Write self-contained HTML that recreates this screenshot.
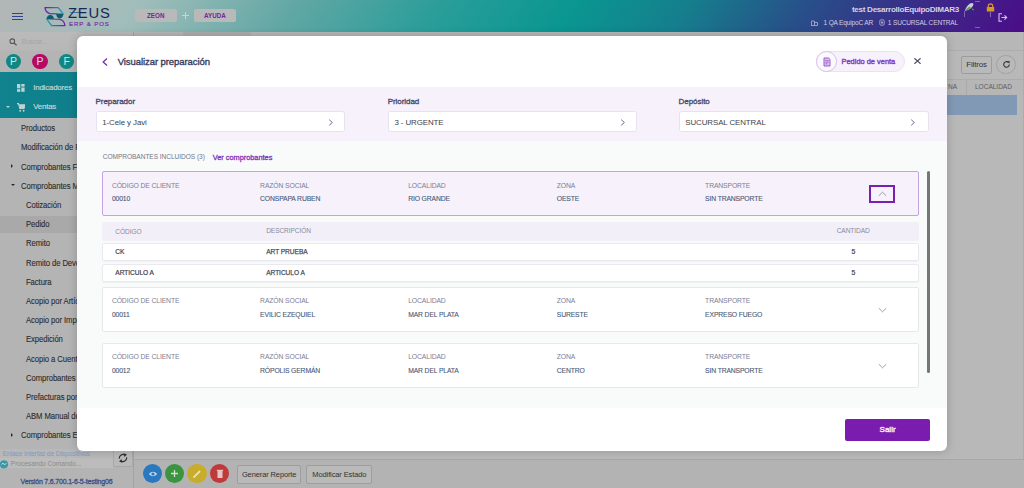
<!DOCTYPE html>
<html><head><meta charset="utf-8">
<style>
*{box-sizing:border-box;margin:0;padding:0}
html,body{width:1024px;height:488px;overflow:hidden;background:#b6b6b6;font-family:"Liberation Sans",sans-serif}
.a{position:absolute;white-space:nowrap}
#hdr{left:0;top:0;width:1024px;height:32px;background:linear-gradient(125deg,#b3b6b6 0%,#a1bdbb 13.5%,#60a7a4 28.8%,#289d99 43.1%,#0a9691 55.3%,#157f8d 66%,#284f89 77.5%,#382f88 87.1%,#4a0f88 99%)}
#side{left:0;top:32px;width:134px;height:456px;background:#b3b3b3;border-right:1px solid #a4a4a4}
#main{left:134px;top:32px;width:890px;height:456px;background:#b8b8b8}
.mi{position:absolute;left:21px;font-size:8.3px;color:#2b2b2b;white-space:nowrap;letter-spacing:-0.1px;-webkit-text-stroke:0.1px #2b2b2b;transform:scaleX(0.93);transform-origin:0 0}
.mi.sub{left:26px}
.circ{position:absolute;top:53.7px;width:15.2px;height:15.2px;border-radius:50%;color:#d8e2e2;font-size:10.5px;text-align:center;line-height:15.4px}
#modal{left:77px;top:36px;width:870px;height:415px;background:#fff;border-radius:6px;overflow:hidden;box-shadow:0 0 10px rgba(0,0,0,0.2)}
</style></head><body>
<!-- HEADER -->
<div id="hdr" class="a">
  <!-- hamburger -->
  <div class="a" style="left:11.5px;top:12.9px;width:11.5px;height:1.1px;background:#2f4390"></div>
  <div class="a" style="left:11.5px;top:15.9px;width:11.5px;height:1.1px;background:#2f4390"></div>
  <div class="a" style="left:11.5px;top:18.9px;width:11.5px;height:1.1px;background:#2f4390"></div>
  <!-- logo mark -->
  <svg class="a" style="left:42px;top:4px" width="26" height="24" viewBox="0 0 26 24">
    <defs>
      <linearGradient id="lg1" x1="0" y1="0" x2="1" y2="0"><stop offset="0" stop-color="#6d1ea6"/><stop offset="1" stop-color="#1fa3ad"/></linearGradient>
      <linearGradient id="lg2" x1="0" y1="0" x2="1" y2="0"><stop offset="0" stop-color="#1fa3ad"/><stop offset="1" stop-color="#7420a8"/></linearGradient>
    </defs>
    <path d="M3 3.7 L16.2 3.7 L21.4 10.1 L7.6 9.5 Q3.6 8.4 3 3.7 Z" fill="none" stroke="url(#lg1)" stroke-width="1.3" stroke-linejoin="round"/>
    <path d="M4.5 14.9 L17.7 15.3 Q22.4 16.2 22.9 21.6 L9.6 21.6 Z" fill="none" stroke="url(#lg2)" stroke-width="1.3" stroke-linejoin="round"/>
    <path d="M14.2 10.1 Q14.6 14.5 17.8 14.5 Q21 14.3 21.3 10.1 Z" fill="#0c5e6a"/>
    <path d="M4.6 14.9 Q5 11 8.3 11 Q11.6 11.2 11.9 14.9 Z" fill="#0c5e6a"/>
  </svg>
  <div class="a" style="left:70px;top:12.3px;width:15.5px;height:1.2px;background:linear-gradient(90deg,#1e9fb0,#7a2bb0)"></div>
  <div class="a" style="left:68px;top:4.5px;font-size:14.5px;color:#1d2552;letter-spacing:0.8px;font-weight:normal;transform:scaleX(1.02);transform-origin:left">ZEUS</div>
  <div class="a" style="left:69px;top:20.2px;font-size:6.1px;color:#7a35a8;letter-spacing:0.9px;-webkit-text-stroke:0.2px #7a35a8">ERP &amp; POS</div>
  <!-- ZEON / AYUDA -->
  <div class="a" style="left:134.5px;top:9px;width:42.5px;height:13px;border-radius:2.5px;background:#b9b9b9;color:#6a2a9c;font-size:6.3px;font-weight:bold;text-align:center;line-height:13px">ZEON</div>
  <div class="a" style="left:182px;top:14.6px;width:7px;height:1.3px;background:#c4d7d6"></div>
  <div class="a" style="left:184.85px;top:11.8px;width:1.3px;height:7px;background:#c4d7d6"></div>
  <div class="a" style="left:194px;top:9px;width:42px;height:13px;border-radius:2.5px;background:#b9b9b9;color:#6a2a9c;font-size:6.3px;font-weight:bold;text-align:center;line-height:13px">AYUDA</div>
  <!-- user -->
  <div class="a" style="right:65px;top:4.6px;font-size:8.1px;font-weight:bold;color:#d4d2e2;letter-spacing:-0.3px">test DesarrolloEquipoDIMAR3</div>
  <div class="a" style="right:66px;top:18.6px;font-size:6.6px;color:#cfcde0;letter-spacing:-0.2px">1 SUCURSAL CENTRAL</div>
  <div class="a" style="right:151px;top:18.6px;font-size:6.6px;color:#cfcde0;letter-spacing:-0.2px">1 QA EquipoC AR</div>
  <!-- building icon -->
  <svg class="a" style="left:811px;top:19.5px" width="7" height="6" viewBox="0 0 7 6"><path d="M0.5 5.5 V1 H3.5 V5.5 M3.5 2.5 H6.5 V5.5 H0 " fill="none" stroke="#a9a3c8" stroke-width="0.9"/></svg>
  <svg class="a" style="left:879px;top:19px" width="6" height="7" viewBox="0 0 6 7"><rect x="0.8" y="0.8" width="4.4" height="5.4" rx="1.2" fill="none" stroke="#a9a3c8" stroke-width="0.9"/><rect x="2" y="2.5" width="2" height="2" fill="#a9a3c8"/></svg>
  <!-- feather -->
  <svg class="a" style="left:964px;top:2px" width="11" height="10" viewBox="0 0 11 10"><path d="M1 9 Q2 4 6 1.5 Q9 0.5 9.5 2 Q9 5 5 7.5 Z" fill="#c9cfd6"/><path d="M1 9 Q2.5 6 5.5 4.5 L7 6 Q4 8 1 9Z" fill="#5aa83a"/><path d="M7.5 6 L10 7.5 L9 8.8 Z" fill="#5aa83a"/></svg>
  <!-- dashed circle -->
  <div class="a" style="left:975px;top:1px;width:5px;height:1px;background:rgba(200,190,230,0.45)"></div>
  <div class="a" style="left:975px;top:27.3px;width:5px;height:1px;background:rgba(200,190,230,0.45)"></div>
  <div class="a" style="left:964px;top:11px;width:1px;height:6px;background:rgba(200,190,230,0.45)"></div>
  <!-- lock -->
  <svg class="a" style="left:986px;top:2.5px" width="9" height="9" viewBox="0 0 9 9"><path d="M2.3 4.5 V3 Q2.3 0.9 4.5 0.9 Q6.7 0.9 6.7 3 V4.5" fill="none" stroke="#d69a2c" stroke-width="1.2"/><rect x="0.8" y="4" width="7.4" height="4.6" rx="0.6" fill="#d69a2c"/></svg>
  <div class="a" style="left:990px;top:12px;width:1px;height:5px;background:rgba(200,190,230,0.5)"></div>
  <!-- exit -->
  <svg class="a" style="left:998px;top:12.5px" width="10" height="9" viewBox="0 0 10 9"><path d="M4 0.7 H1 V8.3 H4" fill="none" stroke="#cdc6e3" stroke-width="1.1"/><path d="M3.5 4.5 H8.7 M6.5 2.3 L8.7 4.5 L6.5 6.7" fill="none" stroke="#cdc6e3" stroke-width="1.1"/></svg>
</div>
<!-- SIDEBAR -->
<div class="a" style="left:0;top:32px;width:134px;height:456px;background:#b4b4b4"></div>
<div class="a" style="left:0;top:32px;width:133px;height:19px;background:linear-gradient(180deg,#bababa,#b7b7b7)"></div>
<svg class="a" style="left:9px;top:37.5px" width="9" height="8" viewBox="0 0 9 8"><circle cx="3.3" cy="3.2" r="2.3" fill="none" stroke="#585858" stroke-width="1.1"/><path d="M5 4.9 L7.6 7.3" stroke="#585858" stroke-width="1.3"/></svg>
<div class="a" style="left:21.5px;top:37.6px;font-size:7px;color:#a6a6a6;letter-spacing:-0.25px">Buscar...</div>
<div class="circ" style="left:5.8px;background:#0f8884">P</div>
<div class="circ" style="left:32.4px;background:#b60966">P</div>
<div class="circ" style="left:59px;background:#0f8884">F</div>
<div class="a" style="left:0;top:72px;width:134px;height:46px;background:linear-gradient(90deg,#10838e,#0e7d88)"></div>
<svg class="a" style="left:17px;top:83.5px" width="8" height="8" viewBox="0 0 8 8"><rect x="0" y="0" width="3.3" height="4.3" fill="#bcd3d5"/><rect x="4.3" y="0" width="3.3" height="2.6" fill="#bcd3d5"/><rect x="0" y="5.2" width="3.3" height="2.6" fill="#bcd3d5"/><rect x="4.3" y="3.5" width="3.3" height="4.3" fill="#bcd3d5"/></svg>
<div class="a" style="left:33.2px;top:82.5px;font-size:7.9px;color:#c5dadb;letter-spacing:-0.18px;-webkit-text-stroke:0.15px #c5dadb">Indicadores</div>
<div class="a" style="left:6px;top:105.6px;width:0;height:0;border-left:2px solid transparent;border-right:2px solid transparent;border-top:2.4px solid #bcd3d5"></div>
<svg class="a" style="left:16.5px;top:102.5px" width="8.5" height="9" viewBox="0 0 8.5 9"><path d="M0 0.6 H1.5 L2.8 5.4 H7 L8.2 1.8 H2" fill="none" stroke="#bcd3d5" stroke-width="1.1"/><path d="M2.2 1.8 H8 L7 5 H3 Z" fill="#bcd3d5"/><circle cx="3.2" cy="7.7" r="0.95" fill="#bcd3d5"/><circle cx="6.6" cy="7.7" r="0.95" fill="#bcd3d5"/></svg>
<div class="a" style="left:33.2px;top:102.4px;font-size:7.9px;color:#c5dadb;letter-spacing:-0.2px;-webkit-text-stroke:0.15px #c5dadb">Ventas</div>
<div class="a" style="left:0;top:216.2px;width:134px;height:16.4px;background:#a9a9a9"></div>
<div class="mi" style="left:20.9px;top:123.1px">Productos</div>
<div class="mi" style="left:20.9px;top:142.3px">Modificación de Precios</div>
<div class="mi" style="left:20.9px;top:161.5px">Comprobantes Fiscales</div>
<div class="a" style="left:11px;top:164.1px;width:0;height:0;border-top:2px solid transparent;border-bottom:2px solid transparent;border-left:2.6px solid #2a2a2a"></div>
<div class="mi" style="left:20.9px;top:180.7px">Comprobantes Manuales</div>
<div class="a" style="left:10.5px;top:184.1px;width:0;height:0;border-left:2px solid transparent;border-right:2px solid transparent;border-top:2.4px solid #2a2a2a"></div>
<div class="mi" style="left:26.4px;top:199.9px">Cotización</div>
<div class="mi" style="left:26.4px;top:219.1px">Pedido</div>
<div class="mi" style="left:26.4px;top:238.3px">Remito</div>
<div class="mi" style="left:26.4px;top:257.5px">Remito de Devolución</div>
<div class="mi" style="left:26.4px;top:276.7px">Factura</div>
<div class="mi" style="left:26.4px;top:295.9px">Acopio por Artículo</div>
<div class="mi" style="left:26.4px;top:315.1px">Acopio por Importe</div>
<div class="mi" style="left:26.4px;top:334.3px">Expedición</div>
<div class="mi" style="left:26.4px;top:353.5px">Acopio a Cuenta</div>
<div class="mi" style="left:26.4px;top:372.7px">Comprobantes de Stock</div>
<div class="mi" style="left:26.4px;top:391.9px">Prefacturas por Pedido</div>
<div class="mi" style="left:26.4px;top:411.1px">ABM Manual de Stock</div>
<div class="mi" style="left:20.9px;top:430.3px">Comprobantes Electrónicos</div>
<div class="a" style="left:11px;top:432.9px;width:0;height:0;border-top:2px solid transparent;border-bottom:2px solid transparent;border-left:2.6px solid #2a2a2a"></div>
<div class="a" style="left:0;top:449px;width:113px;height:9.3px;background:#b8b8b8"></div>
<div class="a" style="left:2.8px;top:449.8px;font-size:6.7px;color:#8597c4;letter-spacing:-0.15px">Enlace Interfaz de Dispositivos</div>
<div class="a" style="left:0;top:458.3px;width:113px;height:9.7px;background:#bcbcbc"></div>
<svg class="a" style="left:-1px;top:459.5px" width="10" height="9" viewBox="0 0 10 9"><circle cx="5" cy="4.3" r="4.1" fill="#3c98a6"/><path d="M2.5 4.5 L4 3 L5.5 5 L7.5 3" fill="none" stroke="#c9e1e4" stroke-width="0.9"/></svg>
<div class="a" style="left:10.8px;top:459.8px;font-size:6.7px;color:#8c8c8c;letter-spacing:-0.08px">Procesando Comando...</div>
<div class="a" style="left:112.7px;top:449px;width:20px;height:18px;border:1px solid #a8a8a8;border-top:none;border-radius:0 0 2px 2px;background:#b9b9b9"></div>
<svg class="a" style="left:117.5px;top:453px" width="10" height="10" viewBox="0 0 10 10"><path d="M1.4 5.6 A3.7 3.7 0 0 1 7.2 2.1" fill="none" stroke="#2e2e2e" stroke-width="1.2"/><path d="M8.6 4.4 A3.7 3.7 0 0 1 2.8 7.9" fill="none" stroke="#2e2e2e" stroke-width="1.2"/><path d="M5.6 0.2 L8.9 1.6 L6.6 3.9 Z" fill="#2e2e2e"/><path d="M4.4 9.8 L1.1 8.4 L3.4 6.1 Z" fill="#2e2e2e"/></svg>
<div class="a" style="left:20.6px;top:478.3px;font-size:7px;color:#3d5088;letter-spacing:-0.19px;-webkit-text-stroke:0.3px #3d5088">Versión 7.6.700.1-6-5-testing06</div>
<div class="a" style="left:133px;top:32px;width:1px;height:456px;background:#a3a3a3"></div>
<!-- MAIN -->
<div class="a" style="left:134px;top:32px;width:890px;height:456px;background:#b8b8b8"></div>
<div class="a" style="left:134px;top:32px;width:890px;height:19px;background:#b7b7b7;border-bottom:1px solid #adadad"></div>
<div class="a" style="left:182.5px;top:32px;width:68px;height:4px;background:#aeaeae"></div>
<div class="a" style="left:961.4px;top:55.7px;width:30.2px;height:18.5px;border:1px solid #9c9c9c;border-radius:2px;background:#b9b9b9;font-size:7.9px;color:#333;text-align:center;line-height:16.5px;letter-spacing:-0.15px">Filtros</div>
<div class="a" style="left:996.3px;top:54.8px;width:19.6px;height:19.6px;border:1px solid #a2a2a2;border-radius:50%;background:#b9b9b9"></div>
<svg class="a" style="left:1001.5px;top:60px" width="9" height="9" viewBox="0 0 9 9"><path d="M7.3 4.5 A2.8 2.8 0 1 1 6.2 2.2" fill="none" stroke="#333" stroke-width="1.1"/><path d="M5 1 L7.8 1.2 L7.3 3.8 Z" fill="#333"/></svg>
<div class="a" style="left:900px;top:79.3px;width:124px;height:16px;background:#b6b6b6;border-top:1px solid #acacac"></div>
<div class="a" style="left:965.5px;top:79.3px;width:1px;height:16px;background:#a9a9a9"></div>
<div class="a" style="left:948px;top:83.4px;font-size:6.6px;color:#5e5e5e">NA</div>
<div class="a" style="left:975px;top:83.4px;font-size:6.6px;color:#5e5e5e;letter-spacing:-0.05px">LOCALIDAD</div>
<div class="a" style="left:900px;top:95.3px;width:116.8px;height:20px;background:#8199b4"></div>

<div class="a" style="left:134px;top:459px;width:890px;height:29px;background:#b3b3b3;border-top:1px solid #a7a7a7"></div>
<div class="a" style="left:1023px;top:32px;width:1px;height:427px;background:#acacac"></div>
<div class="a" style="left:142.7px;top:464px;width:19.2px;height:19.2px;border-radius:50%;background:#2a78c0"></div>
<div class="a" style="left:164.9px;top:464px;width:19.2px;height:19.2px;border-radius:50%;background:#3b943f"></div>
<div class="a" style="left:187.4px;top:464px;width:19.2px;height:19.2px;border-radius:50%;background:#c8ac2b"></div>
<div class="a" style="left:209.8px;top:464px;width:19.2px;height:19.2px;border-radius:50%;background:#c03a3a"></div>
<svg class="a" style="left:147.5px;top:469.5px" width="10" height="8" viewBox="0 0 10 8"><path d="M0.8 4 Q5 -0.5 9.2 4 Q5 8.5 0.8 4 Z" fill="#c6d7e8"/><circle cx="5" cy="4" r="1.6" fill="#2a78c0"/></svg>
<svg class="a" style="left:170px;top:469px" width="9" height="9" viewBox="0 0 9 9"><path d="M4.5 1 V8 M1 4.5 H8" stroke="#cfe0cf" stroke-width="1.3"/></svg>
<svg class="a" style="left:192px;top:469px" width="10" height="10" viewBox="0 0 10 10"><path d="M1.5 8.5 L8 2" stroke="#e8dfb8" stroke-width="1.8"/></svg>
<svg class="a" style="left:215.5px;top:468.5px" width="8" height="10" viewBox="0 0 8 10"><rect x="1.5" y="2" width="5" height="7" fill="#e5c4c4"/><rect x="0.8" y="0.8" width="6.4" height="1.2" fill="#e5c4c4"/></svg>
<div class="a" style="left:236.9px;top:464.5px;width:64.5px;height:19.1px;border:1px solid #9e9e9e;border-radius:2px;background:#b9b9b9;font-size:7.5px;color:#333;text-align:center;line-height:17px;letter-spacing:-0.12px">Generar Reporte</div>
<div class="a" style="left:306.3px;top:464.5px;width:66.1px;height:19.1px;border:1px solid #9e9e9e;border-radius:2px;background:#b9b9b9;font-size:7.5px;color:#333;text-align:center;line-height:17px;letter-spacing:-0.12px">Modificar Estado</div>
<div class="a" style="left:133px;top:32px;width:1px;height:427px;background:#a3a3a3"></div>
<!-- MODAL -->
<div id="modal" class="a">
<svg class="a" style="left:24.5px;top:22px" width="6" height="8" viewBox="0 0 6 8"><path d="M5 0.6 L1.2 4 L5 7.4" fill="none" stroke="#7a2db4" stroke-width="1.3"/></svg>
<div class="a" style="left:40.7px;top:19.6px;font-size:9.5px;color:#383b5e;letter-spacing:-0.07px;-webkit-text-stroke:0.35px #383b5e">Visualizar preparación</div>
<div class="a" style="left:739px;top:15px;width:89px;height:21px;border-radius:11px;background:#f7f1fc;border:1px solid #ebe1f6"></div>
<div class="a" style="left:739px;top:15px;width:21px;height:21px;border-radius:50%;border:1px solid #d6bfee;background:#fbf8fe"></div>
<svg class="a" style="left:745.5px;top:21px" width="8" height="10" viewBox="0 0 8 10"><path d="M1 1 H5.6 L7 2.4 V9 H1 Z" fill="#d7c0ee" stroke="#9a5ec9" stroke-width="1"/><path d="M2.4 3.6 H5.6 M2.4 5.2 H5.6 M2.4 6.8 H4.4" stroke="#9a5ec9" stroke-width="0.8"/></svg>
<div class="a" style="left:764.5px;top:21px;font-size:7.45px;color:#8a3dbf;letter-spacing:0px;-webkit-text-stroke:0.4px #8a3dbf">Pedido de venta</div>
<svg class="a" style="left:836.7px;top:22px" width="7" height="6" viewBox="0 0 7 6"><path d="M0.4 0.2 L6.6 5.8 M6.6 0.2 L0.4 5.8" stroke="#4f5264" stroke-width="1.15"/></svg>
<div class="a" style="left:0;top:51px;width:870px;height:54px;background:#f6f1fa"></div>
<div class="a" style="left:18.5px;top:60.9px;font-size:8px;color:#42486a;letter-spacing:-0.05px;-webkit-text-stroke:0.3px #42486a">Preparador</div>
<div class="a" style="left:18.5px;top:75.3px;width:249.8px;height:20.8px;background:#fff;border:1px solid #e7e2ee;border-radius:2.5px"></div>
<div class="a" style="left:25.2px;top:81.7px;font-size:7.9px;color:#3e3f4a;letter-spacing:-0.08px">1-Cele y Javi</div>
<svg class="a" style="left:251.0px;top:82.5px" width="6" height="7" viewBox="0 0 6 7"><path d="M1.2 0.7 L4.4 3.5 L1.2 6.3" fill="none" stroke="#6b7092" stroke-width="1"/></svg>
<div class="a" style="left:310.7px;top:60.9px;font-size:8px;color:#42486a;letter-spacing:-0.05px;-webkit-text-stroke:0.3px #42486a">Prioridad</div>
<div class="a" style="left:310.7px;top:75.3px;width:249.8px;height:20.8px;background:#fff;border:1px solid #e7e2ee;border-radius:2.5px"></div>
<div class="a" style="left:317.4px;top:81.7px;font-size:7.9px;color:#3e3f4a;letter-spacing:-0.08px">3 - URGENTE</div>
<svg class="a" style="left:543.2px;top:82.5px" width="6" height="7" viewBox="0 0 6 7"><path d="M1.2 0.7 L4.4 3.5 L1.2 6.3" fill="none" stroke="#6b7092" stroke-width="1"/></svg>
<div class="a" style="left:601.6px;top:60.9px;font-size:8px;color:#42486a;letter-spacing:-0.05px;-webkit-text-stroke:0.3px #42486a">Depósito</div>
<div class="a" style="left:601.6px;top:75.3px;width:250px;height:20.8px;background:#fff;border:1px solid #e7e2ee;border-radius:2.5px"></div>
<div class="a" style="left:608.3px;top:81.7px;font-size:7.9px;color:#3e3f4a;letter-spacing:-0.08px">SUCURSAL CENTRAL</div>
<svg class="a" style="left:833.1px;top:82.5px" width="6" height="7" viewBox="0 0 6 7"><path d="M1.2 0.7 L4.4 3.5 L1.2 6.3" fill="none" stroke="#6b7092" stroke-width="1"/></svg>
<div class="a" style="left:0;top:105px;width:870px;height:267px;background:#f9fafa"></div>
<div class="a" style="left:25.7px;top:116.6px;font-size:6.6px;color:#737687;letter-spacing:-0.06px">COMPROBANTES INCLUIDOS (3)</div>
<div class="a" style="left:135.7px;top:117.3px;font-size:7.4px;color:#8134b8;letter-spacing:-0.02px;-webkit-text-stroke:0.3px #8134b8">Ver comprobantes</div>
<div class="a" style="left:850.4px;top:135px;width:3px;height:202px;border-radius:1.5px;background:#767676"></div>
<div class="a" style="left:25px;top:134.7px;width:816.7px;height:45.8px;background:#f6f1fa;border:1px solid #c2a3e3;border-radius:2px"></div>
<div class="a" style="left:34.9px;top:145.9px;font-size:6.8px;color:#7b7e94;letter-spacing:-0.12px">CÓDIGO DE CLIENTE</div>
<div class="a" style="left:34.9px;top:158.9px;font-size:6.8px;color:#485876;letter-spacing:-0.14px;-webkit-text-stroke:0.1px #485876">00010</div>
<div class="a" style="left:183.1px;top:145.9px;font-size:6.8px;color:#7b7e94;letter-spacing:-0.12px">RAZÓN SOCIAL</div>
<div class="a" style="left:183.1px;top:158.9px;font-size:6.8px;color:#485876;letter-spacing:-0.14px;-webkit-text-stroke:0.1px #485876">CONSPAPA RUBEN</div>
<div class="a" style="left:331.2px;top:145.9px;font-size:6.8px;color:#7b7e94;letter-spacing:-0.12px">LOCALIDAD</div>
<div class="a" style="left:331.2px;top:158.9px;font-size:6.8px;color:#485876;letter-spacing:-0.14px;-webkit-text-stroke:0.1px #485876">RIO GRANDE</div>
<div class="a" style="left:479.8px;top:145.9px;font-size:6.8px;color:#7b7e94;letter-spacing:-0.12px">ZONA</div>
<div class="a" style="left:479.8px;top:158.9px;font-size:6.8px;color:#485876;letter-spacing:-0.14px;-webkit-text-stroke:0.1px #485876">OESTE</div>
<div class="a" style="left:628.1px;top:145.9px;font-size:6.8px;color:#7b7e94;letter-spacing:-0.12px">TRANSPORTE</div>
<div class="a" style="left:628.1px;top:158.9px;font-size:6.8px;color:#485876;letter-spacing:-0.14px;-webkit-text-stroke:0.1px #485876">SIN TRANSPORTE</div>
<div class="a" style="left:792.4px;top:148.5px;width:25.3px;height:18.9px;border:2px solid #7a1fb0"></div>
<svg class="a" style="left:800.5px;top:154.5px" width="9" height="6" viewBox="0 0 9 6"><path d="M0.8 4.8 L4.5 1.2 L8.2 4.8" fill="none" stroke="#8e92a8" stroke-width="0.9"/></svg>
<div class="a" style="left:25px;top:251px;width:816.7px;height:45px;background:#fff;border:1px solid #e6e8eb;border-radius:2px"></div>
<div class="a" style="left:34.9px;top:261.2px;font-size:6.8px;color:#7b7e94;letter-spacing:-0.12px">CÓDIGO DE CLIENTE</div>
<div class="a" style="left:34.9px;top:274.9px;font-size:6.8px;color:#485876;letter-spacing:-0.14px;-webkit-text-stroke:0.1px #485876">00011</div>
<div class="a" style="left:183.1px;top:261.2px;font-size:6.8px;color:#7b7e94;letter-spacing:-0.12px">RAZÓN SOCIAL</div>
<div class="a" style="left:183.1px;top:274.9px;font-size:6.8px;color:#485876;letter-spacing:-0.14px;-webkit-text-stroke:0.1px #485876">EVILIC EZEQUIEL</div>
<div class="a" style="left:331.2px;top:261.2px;font-size:6.8px;color:#7b7e94;letter-spacing:-0.12px">LOCALIDAD</div>
<div class="a" style="left:331.2px;top:274.9px;font-size:6.8px;color:#485876;letter-spacing:-0.14px;-webkit-text-stroke:0.1px #485876">MAR DEL PLATA</div>
<div class="a" style="left:479.8px;top:261.2px;font-size:6.8px;color:#7b7e94;letter-spacing:-0.12px">ZONA</div>
<div class="a" style="left:479.8px;top:274.9px;font-size:6.8px;color:#485876;letter-spacing:-0.14px;-webkit-text-stroke:0.1px #485876">SURESTE</div>
<div class="a" style="left:628.1px;top:261.2px;font-size:6.8px;color:#7b7e94;letter-spacing:-0.12px">TRANSPORTE</div>
<div class="a" style="left:628.1px;top:274.9px;font-size:6.8px;color:#485876;letter-spacing:-0.14px;-webkit-text-stroke:0.1px #485876">EXPRESO FUEGO</div>
<svg class="a" style="left:800.5px;top:271.3px" width="9" height="6" viewBox="0 0 9 6"><path d="M0.8 1.2 L4.5 4.8 L8.2 1.2" fill="none" stroke="#8e92a8" stroke-width="0.9"/></svg>
<div class="a" style="left:25px;top:307px;width:816.7px;height:45px;background:#fff;border:1px solid #e6e8eb;border-radius:2px"></div>
<div class="a" style="left:34.9px;top:317.2px;font-size:6.8px;color:#7b7e94;letter-spacing:-0.12px">CÓDIGO DE CLIENTE</div>
<div class="a" style="left:34.9px;top:330.9px;font-size:6.8px;color:#485876;letter-spacing:-0.14px;-webkit-text-stroke:0.1px #485876">00012</div>
<div class="a" style="left:183.1px;top:317.2px;font-size:6.8px;color:#7b7e94;letter-spacing:-0.12px">RAZÓN SOCIAL</div>
<div class="a" style="left:183.1px;top:330.9px;font-size:6.8px;color:#485876;letter-spacing:-0.14px;-webkit-text-stroke:0.1px #485876">RÓPOLIS GERMÁN</div>
<div class="a" style="left:331.2px;top:317.2px;font-size:6.8px;color:#7b7e94;letter-spacing:-0.12px">LOCALIDAD</div>
<div class="a" style="left:331.2px;top:330.9px;font-size:6.8px;color:#485876;letter-spacing:-0.14px;-webkit-text-stroke:0.1px #485876">MAR DEL PLATA</div>
<div class="a" style="left:479.8px;top:317.2px;font-size:6.8px;color:#7b7e94;letter-spacing:-0.12px">ZONA</div>
<div class="a" style="left:479.8px;top:330.9px;font-size:6.8px;color:#485876;letter-spacing:-0.14px;-webkit-text-stroke:0.1px #485876">CENTRO</div>
<div class="a" style="left:628.1px;top:317.2px;font-size:6.8px;color:#7b7e94;letter-spacing:-0.12px">TRANSPORTE</div>
<div class="a" style="left:628.1px;top:330.9px;font-size:6.8px;color:#485876;letter-spacing:-0.14px;-webkit-text-stroke:0.1px #485876">SIN TRANSPORTE</div>
<svg class="a" style="left:800.5px;top:327.3px" width="9" height="6" viewBox="0 0 9 6"><path d="M0.8 1.2 L4.5 4.8 L8.2 1.2" fill="none" stroke="#8e92a8" stroke-width="0.9"/></svg>
<div class="a" style="left:25.2px;top:185.6px;width:816.5px;height:19.1px;background:#f3eff8;border-radius:2px"></div>
<div class="a" style="left:38.3px;top:191.5px;font-size:6.6px;color:#878a9e;letter-spacing:-0.1px">CÓDIGO</div>
<div class="a" style="left:189.2px;top:191.3px;font-size:6.6px;color:#878a9e;letter-spacing:-0.1px">DESCRIPCIÓN</div>
<div class="a" style="left:759.7px;top:191.3px;font-size:6.6px;color:#878a9e;letter-spacing:-0.1px">CANTIDAD</div>
<div class="a" style="left:25.2px;top:206.7px;width:816.5px;height:18px;background:#fff;border:1px solid #e9e9ef;border-radius:2px;box-shadow:0 1px 1px rgba(0,0,0,0.04)"></div>
<div class="a" style="left:38.3px;top:211.9px;font-size:6.6px;color:#3e4152;letter-spacing:-0.05px;-webkit-text-stroke:0.2px #3e4152">CK</div>
<div class="a" style="left:189.2px;top:211.7px;font-size:6.6px;color:#4d5060;letter-spacing:-0.05px;-webkit-text-stroke:0.25px #4d5060">ART PRUEBA</div>
<div class="a" style="left:774.6px;top:211.9px;font-size:6.8px;color:#3e4152;-webkit-text-stroke:0.2px #3e4152">5</div>
<div class="a" style="left:25.2px;top:227.6px;width:816.5px;height:18px;background:#fff;border:1px solid #e9e9ef;border-radius:2px;box-shadow:0 1px 1px rgba(0,0,0,0.04)"></div>
<div class="a" style="left:38.3px;top:232.8px;font-size:6.6px;color:#3e4152;letter-spacing:-0.05px;-webkit-text-stroke:0.2px #3e4152">ARTICULO A</div>
<div class="a" style="left:189.2px;top:232.6px;font-size:6.6px;color:#4d5060;letter-spacing:-0.05px;-webkit-text-stroke:0.25px #4d5060">ARTICULO A</div>
<div class="a" style="left:774.6px;top:232.8px;font-size:6.8px;color:#3e4152;-webkit-text-stroke:0.2px #3e4152">5</div>
<div class="a" style="left:768.2px;top:382.8px;width:84.8px;height:22.5px;border-radius:2px;background:#7a1daf"></div>
<div class="a" style="left:768.2px;top:382.8px;width:84.8px;height:22.5px;line-height:22.5px;text-align:center;font-size:8px;color:#f6f0fb;-webkit-text-stroke:0.4px #f6f0fb">Salir</div>
</div>
</body></html>
